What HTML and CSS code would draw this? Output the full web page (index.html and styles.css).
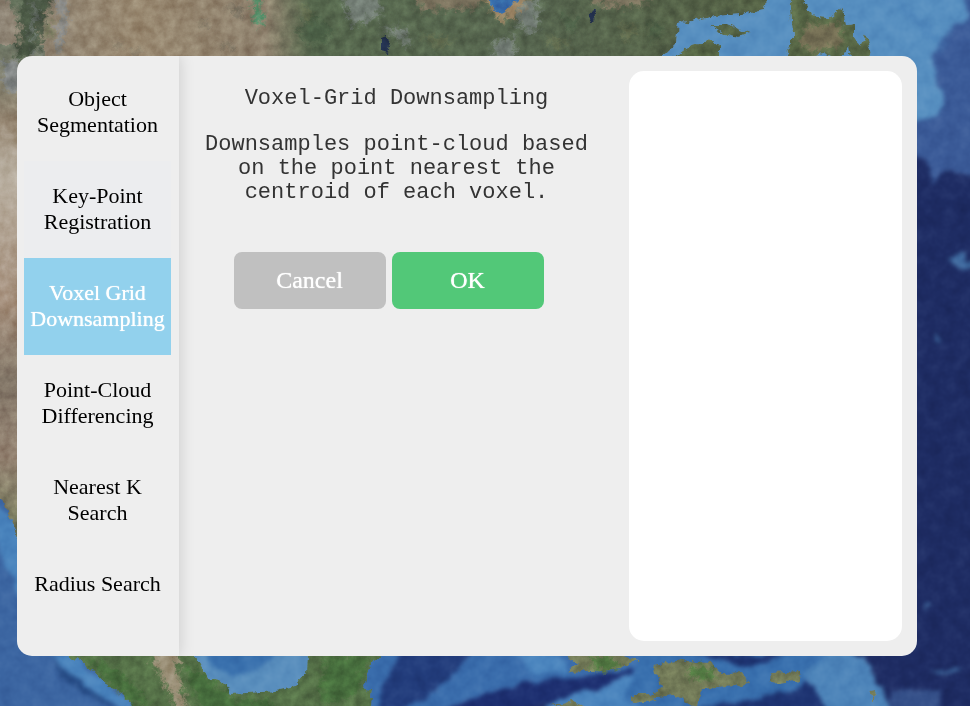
FILE: index.html
```
<!DOCTYPE html>
<html lang="en">
<head>
<meta charset="utf-8">
<meta name="viewport" content="width=device-width, initial-scale=1">
<title>Point-Cloud Tools</title>
<link rel="stylesheet" href="styles.css">
</head>
<body>
<svg class="map" viewBox="0 0 970 706" preserveAspectRatio="xMidYMid slice" aria-hidden="true">
  <defs>
    <filter id="terrain" filterUnits="userSpaceOnUse" x="-20" y="-20" width="1010" height="746" color-interpolation-filters="sRGB">
      <feTurbulence type="fractalNoise" baseFrequency="0.13" numOctaves="4" seed="4" result="warp"/>
      <feDisplacementMap in="SourceGraphic" in2="warp" scale="8" xChannelSelector="R" yChannelSelector="G"/>
      <feGaussianBlur stdDeviation="0.4" result="shape"/>
      <feTurbulence type="fractalNoise" baseFrequency="0.09" numOctaves="5" seed="9"/>
      <feColorMatrix values="0.5 0 0 0 0.22  0.5 0 0 0 0.22  0.5 0 0 0 0.22  0 0 0 0 1" result="grain"/>
      <feBlend in="grain" in2="shape" mode="overlay" result="lit"/>
      <feBlend in="shape" in2="grain" mode="soft-light" result="tone"/>
      <feComposite in="shape" in2="lit" operator="arithmetic" k1="0" k2="0.5" k3="0.5" k4="0"/>
      <feComposite in2="shape" operator="in"/>
    </filter>
    <filter id="patches" filterUnits="userSpaceOnUse" x="-20" y="-20" width="1010" height="746" color-interpolation-filters="sRGB">
      <feGaussianBlur in="SourceGraphic" stdDeviation="2" result="shape"/>
      <feTurbulence type="fractalNoise" baseFrequency="0.2" numOctaves="3" seed="12" result="warp"/>
      <feDisplacementMap in="shape" in2="warp" scale="16" xChannelSelector="R" yChannelSelector="G"/>
    </filter>
    <filter id="water" filterUnits="userSpaceOnUse" x="-20" y="-20" width="1010" height="746" color-interpolation-filters="sRGB">
      <feTurbulence type="fractalNoise" baseFrequency="0.06" numOctaves="4" seed="7" result="warp"/>
      <feDisplacementMap in="SourceGraphic" in2="warp" scale="12" xChannelSelector="R" yChannelSelector="G"/>
      <feGaussianBlur stdDeviation="2" result="shape"/>
      <feTurbulence type="fractalNoise" baseFrequency="0.07" numOctaves="3" seed="2"/>
      <feColorMatrix values="0.2 0 0 0 0.4  0.2 0 0 0 0.4  0.2 0 0 0 0.4  0 0 0 0 1" result="swell"/>
      <feBlend in="swell" in2="shape" mode="soft-light"/>
    </filter>
    <linearGradient id="plains">
      <stop offset="0" stop-color="#8f8678"/><stop offset=".2" stop-color="#9b8b73"/>
      <stop offset=".36" stop-color="#928571"/><stop offset=".42" stop-color="#596b50"/>
      <stop offset=".7" stop-color="#596851"/><stop offset="1" stop-color="#566346"/>
    </linearGradient>
    <linearGradient id="west" x1="0" y1="0" x2="0" y2="1">
      <stop offset="0" stop-color="#747c6a"/><stop offset=".15" stop-color="#998a76"/>
      <stop offset=".25" stop-color="#bcb3a5"/><stop offset=".5" stop-color="#a7927f"/>
      <stop offset=".65" stop-color="#85796a"/><stop offset=".8" stop-color="#978675"/><stop offset="1" stop-color="#667450"/>
    </linearGradient>
  </defs>

  <g filter="url(#water)">
    <rect x="-20" y="-20" width="1010" height="750" fill="#1e2c63"/>
    <path fill="#3b5b98" d="M900-20H990V175L950 170 933 184 925 160 900 150Z"/>
    <path fill="#578fc0" d="M640-20H955L971 16 945 36 932 54 936 78 942 98 938 116 910 122V70H640Z"/>
    <path fill="#447db7" d="M885-10Q940 30 950 45L938 52Q920 20 875-5Z" opacity=".3"/>
    <path fill="#3c66a2" d="M-20 480H30V640H130L160 726H-20Z"/>
    <path fill="#4a84bd" d="M-10 500L30 535V610L0 555ZM48 654L75 656 102 680 145 712 128 712 90 690Z"/>
    <path fill="#274d87" d="M48 656L120 710 94 700 65 680Z"/>
    <path fill="#598ebd" d="M182 640H318V700H182Z"/>
    <path fill="#3970ad" d="M205 645H276Q267 672 231 677 209 671 205 645Z"/>
    <path fill="#3a6dac" d="M366 640H680V670L510 688 450 712H350Z"/>
    <path fill="#223c7b" d="M403 645L475 650 445 684 405 710H378Q382 677 403 645Z"/>
    <path fill="#4b85be" d="M508 650L560 655 570 670 535 674ZM560 696L650 668 740 685 700 712H540Z"/>
    <path fill="#1d2f70" d="M442 712L485 693 555 678 620 673 653 662 610 684 562 699 520 712Z"/>
    <path fill="#3970ae" d="M640 650L850 645 895 716 690 720 625 700Z"/>
    <path fill="#1e3472" d="M680 652L785 653 748 667 720 660ZM695 710L760 698 822 678 828 715Z"/>
    <path fill="#4d84b9" d="M804 676L830 650 866 655 892 712H835Z"/>
    <path fill="#344f88" d="M892 691H940V720H887Z"/>
    <path fill="#3f6a9f" d="M950 260L958 257 962 251 968 261 976 260V272L962 270 953 266ZM926 603L932 607 924 610ZM928 670L964 668 950 673ZM934 331L942 339 939 344Z"/>
  </g>

  <g filter="url(#terrain)">
    <path fill="url(#plains)" d="M-20-20H770L764 9 742 14 716 16 678 24 676 43 658 61H-20Z"/>
    <path fill="url(#west)" d="M-20 45H45V560L19 541 4 503-20 480Z"/>
    <path fill="#5b6b49" d="M709 25L728 25 750 34 738 37 722 33ZM668 62L688 46 710 40 720 46 720 60ZM790-6L801-4 808 8 811 15 829 17 843 8 846 25 854 24 854 37 860 46 866 34 872 60H850L848 46 840 60 824 53 795 60 785 52 793 37Z"/>
    <path fill="#58744a" d="M60 650L87 665 104 683 123 694 141 714H370L373 690 364 689 367 672 382 650H308L307 673 294 687 274 691 261 692 230 694 222 681 207 677 195 656V640H60Z"/>
    <path fill="#757d5a" d="M560 650H615L640 660 614 670 568 672 577 664ZM653 665L682 660 710 663 723 674 742 673 749 683 736 686 702 690 696 708 675 695 642 699 662 688 656 675ZM771 673L798 671 801 680 772 684ZM630 695L650 695 659 701 633 703ZM551 706L570 701 592 708ZM870 690L875 689 874 701Z"/>
    <g filter="url(#patches)">
      <path fill="#65735d" d="M6-8H38L36 28 24 60H16L21 28Z"/>
      <path fill="#4c5a46" d="M22-8L54-8 44 22 37 58H18L20 26Z"/>
      <path fill="#85898c" opacity=".85" d="M54-8L66-8 67 22 63 48 57 58 57 32 61 18ZM34 0L37 8 35 38 31 42 33 20ZM0 60H21V95L5 90ZM28 54L40 50 36 58Z"/>
      <path fill="#7f8365" d="M50 18L45 30 49 42 53 30Z"/>
      <path fill="#4d9068" d="M252-5L259 0 263 24 255 25Z"/>
      <path fill="#736e5e" opacity=".7" d="M228 5L243 8 243 18 234 14ZM222 43L234 45 229 51ZM200 22L208 24 203 29ZM128 52L142 50 138 56ZM112 43L120 44 118 50Z"/>
      <path fill="#807762" d="M415-8H485L477 8 420 10ZM590-8L655-8 640 6 600 6Z"/>
      <path fill="#7b857f" opacity=".85" d="M342-8L378-6 380 18 352 24 346 12ZM382 27L404 29 412 44 400 43ZM515 0L538 0 537 30 525 32 518 20ZM493 42L517 36 512 60 494 60Z"/>
      <path fill="#6c7554" d="M300 5L315 12 308 25ZM420 35L455 40 440 50ZM545 35L570 42 555 50ZM620 22L640 30 625 42Z" opacity=".7"/>
      <path fill="#41573f" d="M310 15L335 30 320 45 295 36ZM560 12L580 22 570 34ZM650 20L665 30 650 42Z" opacity=".55"/>
      <path fill="#9b8565" d="M479-8L497 18 512 20 533-8Z"/>
      <path fill="#797358" d="M803 26L840 24 842 44 816 53 800 45Z"/>
      <path fill="#9d927a" d="M149 650H180L177 670 188 714H178L163 679Z"/>
      <path fill="#427039" opacity=".65" d="M184 665L209 679 234 699 270 700 284 716H204ZM324 657L367 654 359 690 339 703H320ZM85 657L120 672 150 703 135 706 106 680Z"/>
      <path fill="#537b43" d="M592 655L612 656 621 668 594 672ZM689 665L712 668 715 679 690 679Z"/>
    </g>
    <path fill="#3970ad" d="M484-8L491 5 502 14 524-8Z"/>
    <path fill="#243250" d="M381 38L387 36 391 43 388 52 381 50ZM590 13L596 11 594 20 588 25Z"/>
  </g>
</svg>

<main class="dialog">
  <nav class="sidebar" aria-label="Tools">
    <button class="tool" type="button">Object Segmentation</button>
    <button class="tool tool-hover" type="button">Key-Point Registration</button>
    <button class="tool tool-active" type="button" aria-current="true">Voxel Grid Downsampling</button>
    <button class="tool" type="button">Point-Cloud Differencing</button>
    <button class="tool" type="button">Nearest K Search</button>
    <button class="tool" type="button">Radius Search</button>
  </nav>
  <section class="details">
    <h1 class="title">Voxel-Grid Downsampling</h1>
    <p class="description">Downsamples point-cloud based on the point nearest the centroid of each voxel.</p>
    <div class="actions">
      <button class="action cancel" type="button">Cancel</button>
      <button class="action ok" type="button">OK</button>
    </div>
  </section>
  <section class="output" aria-label="Output"></section>
</main>
</body>
</html>
```

FILE: styles.css
```
* { box-sizing: border-box; }

body {
  margin: 0;
  min-height: 100vh;
  display: flex;
  flex-direction: column;
  background: #1e2c63;
  font-family: "Liberation Serif", serif;
}

.map {
  position: fixed;
  inset: 0;
  width: 100%;
  height: 100%;
  z-index: -1;
}

.dialog {
  flex: 1;
  display: grid;
  grid-template-columns: 162px 1fr 273px;
  max-width: 900px;
  margin: 56px 17px 50px;
  padding-right: 15px;
  background: #eee;
  border-radius: 15px;
  overflow: hidden;
}

.sidebar {
  padding: 8px 8px 8px 7px;
  box-shadow: 0 0 15px rgba(0, 0, 0, .16);
  clip-path: inset(0 -15px 0 0);
}

.tool {
  display: flex;
  align-items: flex-start;
  justify-content: center;
  width: 100%;
  min-height: 97px;
  padding: 22px 4px 23px;
  border: 0;
  background: transparent;
  color: #000;
  font: 22px/26px "Liberation Serif", serif;
  text-align: center;
}

.tool-hover { background: #ecedef; }

.tool-active {
  background: #92d1ed;
  color: #fff;
  text-shadow: 0 0 1px #fff;
}

.details {
  padding: 31px 15px 24px 0;
  display: flex;
  flex-direction: column;
  align-items: center;
  text-align: center;
  color: #333;
  font: 22px/24px "Liberation Mono", monospace;
}

.title {
  margin: 0 0 22px;
  font: inherit;
}

.description {
  margin: 0 0 47px;
  max-width: 390px;
}

.actions {
  display: flex;
  gap: 6px;
  margin-right: 16px;
}

.action {
  width: 152px;
  height: 57px;
  padding: 0 6px 2px;
  border: 0;
  border-radius: 8px;
  color: #fff;
  font: 24px/26px "Liberation Serif", serif;
  text-shadow: 0 0 1px #fff;
}

.cancel { background: #c0c0c0; }
.ok { background: #52c878; }

.output {
  margin: 15px 0;
  background: #fff;
  border-radius: 15px;
}
```
